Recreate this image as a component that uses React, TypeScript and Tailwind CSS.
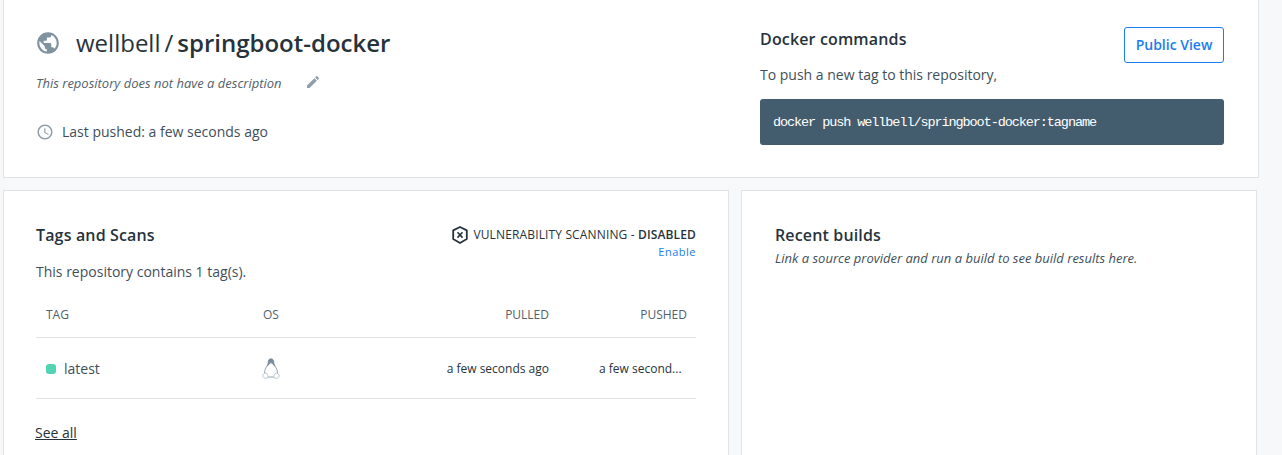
import { MdAccessTime, MdEdit, MdPublic } from "react-icons/md";

function ShieldOff() {
  return (
    <svg viewBox="0 0 16 18" className="h-[18px] w-4 shrink-0" fill="none" stroke="#27333b" aria-hidden="true">
      <path d="M8 1 14.800 4.400V13L8 17 1.200 13V4.400z" strokeWidth="1.800" strokeLinejoin="round" />
      <path d="M5.500 6.300l5 5.300M10.500 6.300l-5 5.300" strokeWidth="1.600" />
    </svg>
  );
}

function Tux() {
  return (
    <svg viewBox="0 0 18 21" className="ml-[-1px] mt-[-1px] h-[21px] w-[18px]" aria-hidden="true">
      <path d="M9 .8C7 .8 6.200 2.400 6.200 4.300c0 2-1.100 3.500-2.300 5.500-1 1.700-1.500 3.700-1.300 6l3 3.200h6.800l3-3.200c.2-2.300-.3-4.300-1.300-6-1.200-2-2.300-3.500-2.300-5.500C11.800 2.400 11 .8 9 .8z" fill="#fff" stroke="#8c9ca6" strokeWidth="0.900" />
      <path d="M9 .8C7 .8 6.200 2.400 6.200 4.300c0 1.800-.9 3.200-2 5 1.300-.7 2.400-2.200 3.300-3.200h3c.9 1 2 2.500 3.300 3.200-1.100-1.800-2-3.200-2-5C11.800 2.400 11 .8 9 .8z" fill="#75899a" />
      <path d="M7.500 4.700h3L9 6.700z" fill="#d5dce0" />
      <path d="M.8 17.200c.8-1.700 2.900-2.900 4-1.700.9 1 1.500 2.700 1.500 3.900-1.600 1.100-3.400 1.100-4.400.3-.6-.5-1.500-1.100-1.100-2.500zM17.200 17.200c-.8-1.700-2.900-2.900-4-1.700-.9 1-1.500 2.700-1.500 3.900 1.600 1.100 3.400 1.100 4.400.3.600-.5 1.500-1.100 1.100-2.500z" fill="#fff" stroke="#a9b6bd" strokeWidth="0.800" />
    </svg>
  );
}

export default function App() {
  return (
    <main className="h-[455px] w-[1282px] overflow-hidden bg-[#f7f8fa] pl-[3px] font-['Open_Sans',sans-serif] text-[#27333b]">
      {/* repo header */}
      <section className="flex h-[178px] w-[1256px] justify-between border-x border-b border-[#e0e4e7] bg-white pl-8 pr-[34px]">
        <div className="w-[724px] pt-[27px]">
          <h1 className="flex h-8 items-center text-2xl leading-8">
            <MdPublic className="ml-[-1px] mr-[15px] h-[26px] w-[26px] text-[#7f929e]" />
            <span>wellbell</span>
            <span className="ml-[4px] mr-[4px]">/</span>
            <span className="font-[550]">springboot-docker</span>
          </h1>
          <div className="mt-[15px] flex h-5 items-center">
            <p className="text-[13px] italic text-[#52616b]">This repository does not have a description</p>
            <MdEdit className="ml-[23px] mt-[-4px] h-4 w-4 text-[#8f9ea8]" />
          </div>
          <div className="mt-[28px] flex h-5 items-center text-sm text-[#3f4f5a]">
            <MdAccessTime className="mr-[8px] h-[18px] w-[18px] text-[#8f9ea8]" />
            <span>Last pushed: a few seconds ago</span>
          </div>
        </div>
        <div className="w-[464px]">
          <div className="flex items-start justify-between pt-[27px]">
            <h2 className="mt-[1px] text-base font-semibold leading-[22px] tracking-[0.15px]">Docker commands</h2>
            <button className="h-9 w-[100px] rounded-[3px] border border-[#1a7df0] text-sm font-semibold text-[#1a7df0]">
              Public View
            </button>
          </div>
          <p className="mt-[2px] text-sm leading-5 text-[#3f4f5a]">To push a new tag to this repository,</p>
          <div className="mt-[14px] flex h-[46px] items-center rounded-[3px] bg-[#445d6e] px-[13px] pt-[2px] font-['Liberation_Mono',monospace] text-[13.5px] tracking-[-1.08px] text-white">
            docker push wellbell/springboot-docker:tagname
          </div>
        </div>
      </section>

      <div className="mt-3 flex gap-3">
        {/* tags */}
        <section className="h-[300px] w-[726px] border border-[#e0e4e7] bg-white px-8 pt-[33px]">
          <div className="flex justify-between">
            <h2 className="text-base font-semibold leading-[22px] tracking-[0.15px]">Tags and Scans</h2>
            <div className="pt-[2px] text-right text-xs leading-4 tracking-[0.14px]">
              <div className="flex items-center gap-[5px]">
                <ShieldOff />
                <span>
                  VULNERABILITY SCANNING - <span className="font-semibold">DISABLED</span>
                </span>
              </div>
              <a className="block text-[11px] leading-[15px] tracking-[0.5px] text-[#1a7df0]">Enable</a>
            </div>
          </div>
          <p className="mt-[3px] text-sm leading-5 text-[#3f4f5a]">This repository contains 1 tag(s).</p>

          <div className="mt-[10px] w-[660px]">
            <div className="grid h-[46px] grid-cols-[217px_120px_166px_138px] items-center border-b border-[#e0e4e7] pl-[10px] text-xs text-[#52616b]">
              <span>TAG</span>
              <span>OS</span>
              <span className="text-right">PULLED</span>
              <span className="text-right">PUSHED</span>
            </div>
            <div className="grid h-[61px] grid-cols-[217px_120px_166px_138px] items-center border-b border-[#e0e4e7] pl-[10px] pt-[2px]">
              <span className="flex items-center gap-2 text-sm text-[#3f4f5a]">
                <span className="h-[10px] w-[10px] rounded-[3px] bg-[#52d3b3]" />
                latest
              </span>
              <Tux />
              <span className="text-right text-xs text-[#27333b]">a few seconds ago</span>
              <span className="ml-[50px] whitespace-nowrap text-xs text-[#27333b]">a few second...</span>
            </div>
          </div>
          <a className="ml-[-1px] mt-[24px] block text-sm leading-5 text-[#27333b] underline">See all</a>
        </section>

        {/* builds */}
        <section className="h-[300px] w-[516px] border border-[#e0e4e7] bg-white pl-[33px] pt-[33px]">
          <h2 className="text-base font-semibold leading-[22px] tracking-[0.15px]">Recent builds</h2>
          <p className="mt-[3px] text-[13px] italic leading-[18px] text-[#3f4f5a]">
            Link a source provider and run a build to see build results here.
          </p>
        </section>
      </div>
    </main>
  );
}
